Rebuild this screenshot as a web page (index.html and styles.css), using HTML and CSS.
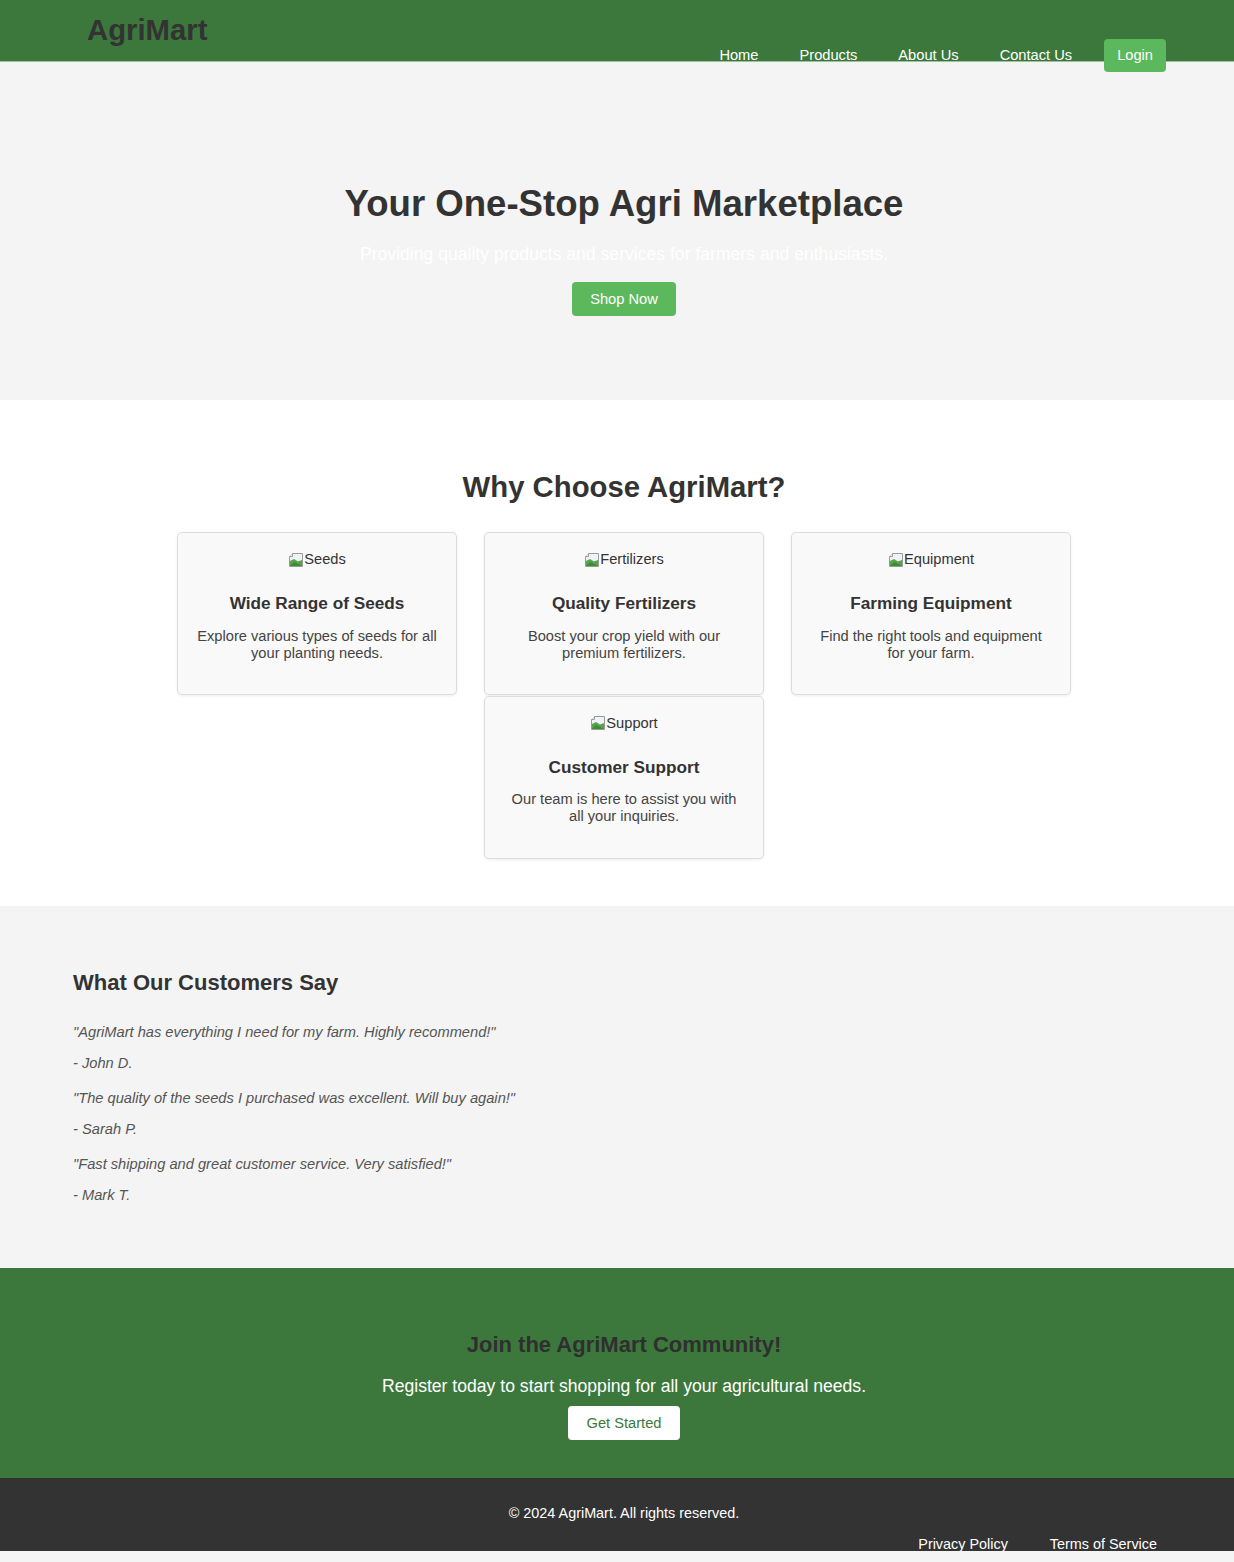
FILE: index.html
```html
<!DOCTYPE html>
<html lang="en">
<head>
<meta charset="utf-8">
<title>AgriMart</title>
<link rel="stylesheet" href="styles.css">
</head>
<body>
<header class="site-header">
  <h1 class="logo">AgriMart</h1>
  <nav class="nav">
    <a href="#" class="nav-link">Home</a>
    <a href="#" class="nav-link">Products</a>
    <a href="#" class="nav-link">About Us</a>
    <a href="#" class="nav-link">Contact Us</a>
    <a href="#" class="nav-login">Login</a>
  </nav>
</header>

<section class="hero">
  <h2 class="hero-title">Your One-Stop Agri Marketplace</h2>
  <p class="hero-sub">Providing quality products and services for farmers and enthusiasts.</p>
  <a href="#" class="btn-green">Shop Now</a>
</section>

<section class="features">
  <h2 class="section-title">Why Choose AgriMart?</h2>
  <div class="cards">
    <div class="card">
      <div class="card-img"><svg class="broken" width="16" height="16" viewBox="0 0 16 16"><path d="M1.5 4.5 L4.5 1.5 H14.5 V14.5 H1.5 Z" fill="#eef3f8" stroke="#9a9a9a"/><path d="M2 9 L6 7 L10 9.5 L14 8 V14 H2 Z" fill="#56a34a"/><path d="M2 14 L6 10 L14 14 Z" fill="#3e8a36"/><path d="M1.5 4.5 H4.5 V1.5" fill="#fff" stroke="#9a9a9a"/></svg>Seeds</div>
      <h3 class="card-title">Wide Range of Seeds</h3>
      <p class="card-text">Explore various types of seeds for all your planting needs.</p>
    </div>
    <div class="card">
      <div class="card-img"><svg class="broken" width="16" height="16" viewBox="0 0 16 16"><path d="M1.5 4.5 L4.5 1.5 H14.5 V14.5 H1.5 Z" fill="#eef3f8" stroke="#9a9a9a"/><path d="M2 9 L6 7 L10 9.5 L14 8 V14 H2 Z" fill="#56a34a"/><path d="M2 14 L6 10 L14 14 Z" fill="#3e8a36"/><path d="M1.5 4.5 H4.5 V1.5" fill="#fff" stroke="#9a9a9a"/></svg>Fertilizers</div>
      <h3 class="card-title">Quality Fertilizers</h3>
      <p class="card-text">Boost your crop yield with our premium fertilizers.</p>
    </div>
    <div class="card">
      <div class="card-img"><svg class="broken" width="16" height="16" viewBox="0 0 16 16"><path d="M1.5 4.5 L4.5 1.5 H14.5 V14.5 H1.5 Z" fill="#eef3f8" stroke="#9a9a9a"/><path d="M2 9 L6 7 L10 9.5 L14 8 V14 H2 Z" fill="#56a34a"/><path d="M2 14 L6 10 L14 14 Z" fill="#3e8a36"/><path d="M1.5 4.5 H4.5 V1.5" fill="#fff" stroke="#9a9a9a"/></svg>Equipment</div>
      <h3 class="card-title">Farming Equipment</h3>
      <p class="card-text">Find the right tools and equipment for your farm.</p>
    </div>
    <div class="card">
      <div class="card-img"><svg class="broken" width="16" height="16" viewBox="0 0 16 16"><path d="M1.5 4.5 L4.5 1.5 H14.5 V14.5 H1.5 Z" fill="#eef3f8" stroke="#9a9a9a"/><path d="M2 9 L6 7 L10 9.5 L14 8 V14 H2 Z" fill="#56a34a"/><path d="M2 14 L6 10 L14 14 Z" fill="#3e8a36"/><path d="M1.5 4.5 H4.5 V1.5" fill="#fff" stroke="#9a9a9a"/></svg>Support</div>
      <h3 class="card-title">Customer Support</h3>
      <p class="card-text">Our team is here to assist you with all your inquiries.</p>
    </div>
  </div>
</section>

<section class="testimonials">
  <h2 class="testi-title">What Our Customers Say</h2>
  <div class="testi-list">
    <div class="testi">
      <p class="quote">"AgriMart has everything I need for my farm. Highly recommend!"</p>
      <p class="author">- John D.</p>
    </div>
    <div class="testi">
      <p class="quote">"The quality of the seeds I purchased was excellent. Will buy again!"</p>
      <p class="author">- Sarah P.</p>
    </div>
    <div class="testi">
      <p class="quote">"Fast shipping and great customer service. Very satisfied!"</p>
      <p class="author">- Mark T.</p>
    </div>
  </div>
</section>

<section class="cta">
  <h2 class="cta-title">Join the AgriMart Community!</h2>
  <p class="cta-text">Register today to start shopping for all your agricultural needs.</p>
  <a href="#" class="btn-white">Get Started</a>
</section>

<footer class="site-footer">
  <p class="copy">&copy; 2024 AgriMart. All rights reserved.</p>
  <div class="footer-links">
    <a href="#" class="footer-link">Privacy Policy</a>
    <a href="#" class="footer-link">Terms of Service</a>
  </div>
</footer>
</body>
</html>
```

FILE: styles.css
```css
* { box-sizing: border-box; }

html, body {
  margin: 0;
  padding: 0;
}

body {
  background: #f4f4f4;
  font-family: "Liberation Sans", Arial, sans-serif;
  font-size: 14.67px;
  color: #333;
}

a { text-decoration: none; }

/* Header */
.site-header {
  height: 62px;
  background: #3c783c;
  border-bottom: 1px solid #9dc39d;
  display: flex;
  justify-content: space-between;
  align-items: flex-start;
  padding: 0 68px 0 87px;
}

.logo {
  margin: 0;
  padding-top: 13px;
  font-size: 29.3px;
  line-height: 34px;
  font-weight: bold;
  color: #333;
}

.nav {
  display: flex;
  align-items: center;
  gap: 41px;
  margin-top: 39px;
  height: 33px;
  position: relative;
  z-index: 1;
}

.nav-link {
  color: #fff;
  font-size: 14.67px;
  line-height: 17px;
}

.nav-login {
  margin-left: -9px;
  background: #5cb85c;
  color: #fff;
  font-size: 14.67px;
  line-height: 17px;
  padding: 8px 13px;
  border-radius: 4px;
}

/* Hero */
.hero {
  background: #f4f4f4;
  text-align: center;
  padding: 121px 0 84px 14px;
}

.hero-title {
  margin: 0 0 19px;
  font-size: 36.6px;
  line-height: 42px;
  font-weight: bold;
  color: #333;
}

.hero-sub {
  margin: 0 0 18px;
  font-size: 17.6px;
  line-height: 20px;
  color: #fff;
}

.btn-green {
  display: inline-block;
  background: #5cb85c;
  color: #fff;
  font-size: 14.67px;
  line-height: 18px;
  padding: 8px 18px;
  border-radius: 4px;
}

/* Features */
.features {
  background: #fff;
  text-align: center;
  padding: 70px 0 47px 14px;
}

.section-title {
  margin: 0 0 28px;
  font-size: 29.3px;
  line-height: 34px;
  font-weight: bold;
  color: #333;
}

.cards {
  display: flex;
  flex-wrap: wrap;
  justify-content: center;
  column-gap: 27px;
  row-gap: 1px;
  max-width: 940px;
  margin: 0 auto;
}

.card {
  width: 280px;
  background: #f9f9f9;
  border: 1px solid #ddd;
  border-radius: 5px;
  box-shadow: 0 1px 3px rgba(0, 0, 0, 0.08);
  padding: 18px 18px;
}

.card-img {
  height: 17px;
  line-height: 17px;
  font-size: 14.67px;
  color: #333;
  display: flex;
  justify-content: center;
  align-items: center;
}

.broken {
  display: block;
}

.card-title {
  margin: 25px 0 14.5px;
  font-size: 17.2px;
  line-height: 20px;
  font-weight: bold;
  color: #333;
}

.card-text {
  margin: 14.5px 0 14.3px;
  font-size: 14.67px;
  line-height: 17px;
  color: #444;
}

/* Testimonials */
.testimonials {
  background: #f4f4f4;
  padding: 64px 73px 64px;
}

.testi-title {
  margin: 0 0 28px;
  font-size: 22px;
  line-height: 26px;
  font-weight: bold;
  color: #333;
}

.testi-list {
  display: flex;
  flex-direction: column;
  gap: 17.4px;
}

.testi p {
  margin: 0;
  font-style: italic;
  font-size: 14.67px;
  line-height: 17px;
  color: #555;
}

.testi .quote {
  margin-bottom: 14.6px;
}

/* CTA */
.cta {
  background: #3c783c;
  text-align: center;
  padding: 64px 0 38px 14px;
}

.cta-title {
  margin: 0 0 18px;
  font-size: 22px;
  line-height: 26px;
  font-weight: bold;
  color: #2f2f2f;
}

.cta-text {
  margin: 0 0 10px;
  font-size: 17.6px;
  line-height: 20px;
  color: #fff;
}

.btn-white {
  display: inline-block;
  background: #fff;
  color: #3c783c;
  font-size: 14.67px;
  line-height: 18px;
  padding: 8px 18.5px;
  border-radius: 4px;
}

/* Footer */
.site-footer {
  height: 73px;
  background: #333;
  color: #fff;
  padding: 27px 0 0 14px;
  text-align: center;
}

.copy {
  margin: 0;
  font-size: 14.4px;
  line-height: 17px;
}

.footer-links {
  margin-top: 14px;
  display: flex;
  justify-content: flex-end;
  gap: 42px;
  padding-right: 77px;
}

.footer-link {
  color: #fff;
  font-size: 14.4px;
  line-height: 17px;
}
```
